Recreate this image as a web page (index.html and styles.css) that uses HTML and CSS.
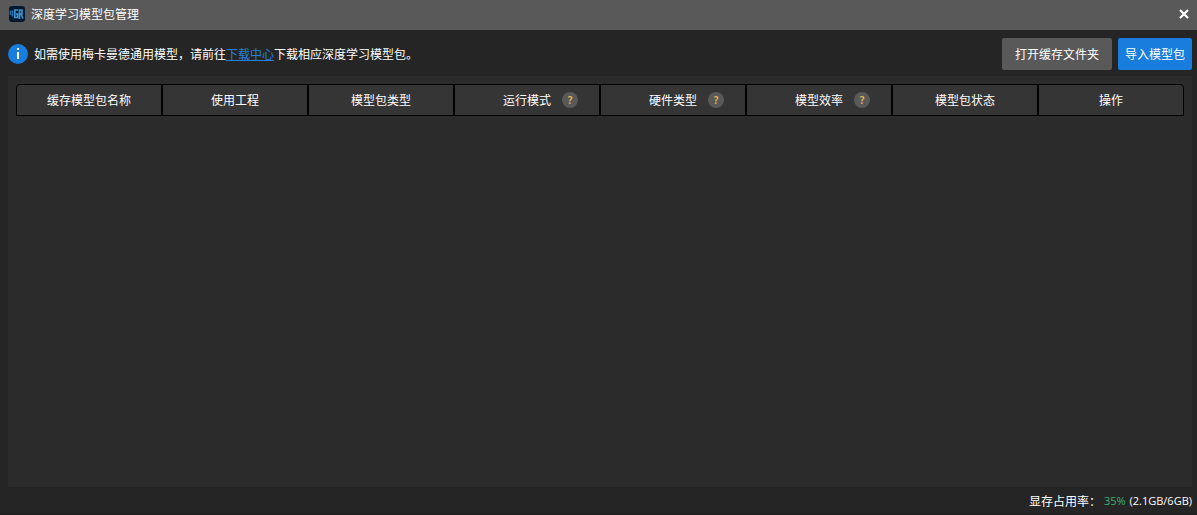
FILE: index.html
```html
<!DOCTYPE html>
<html lang="zh-CN">
<head>
<meta charset="utf-8">
<title>深度学习模型包管理</title>
<link rel="stylesheet" href="styles.css">
</head>
<body>
<div class="window">
  <header class="titlebar">
    <svg class="logo" viewBox="0 0 16 16" aria-hidden="true">
      <rect width="16" height="16" rx="3" fill="#05192e"/>
      <path d="M1.500 4.500v4.500M3.500 4.500v6" fill="none" stroke="#2a70ab" stroke-width="1.500"/>
      <path d="M9 4H5.800v7.500H8.500V8H7M10.500 13V4H13v4h-2.500M12 8l2 4.500" fill="none" stroke="#3f92cf" stroke-width="1.700"/>
    </svg>
    <h1 class="title">深度学习模型包管理</h1>
    <button class="close" type="button" aria-label="关闭">
      <svg viewBox="0 0 10 10" aria-hidden="true"><path d="M1 1l8 8M9 1l-8 8" stroke="#fff" stroke-width="2.200"/></svg>
    </button>
  </header>
  <div class="toolbar">
    <svg class="info" viewBox="0 0 20 20" aria-hidden="true">
      <circle cx="10" cy="10" r="10" fill="#187ddd"/>
      <path d="M9 4h2v2H9zM9 8h2v7H9z" fill="#fff"/>
    </svg>
    <p class="hint">如需使用梅卡曼德通用模型，请前往<a class="link" href="#">下载中心</a>下载相应深度学习模型包。</p>
    <button class="button" type="button">打开缓存文件夹</button>
    <button class="button primary" type="button">导入模型包</button>
  </div>
  <main class="panel">
    <table class="models">
      <thead>
        <tr>
          <th>缓存模型包名称</th>
          <th>使用工程</th>
          <th>模型包类型</th>
          <th><div class="head"><span class="label">运行模式</span><button class="help" type="button">?</button></div></th>
          <th><div class="head"><span class="label">硬件类型</span><button class="help" type="button">?</button></div></th>
          <th><div class="head"><span class="label">模型效率</span><button class="help" type="button">?</button></div></th>
          <th>模型包状态</th>
          <th>操作</th>
        </tr>
      </thead>
    </table>
  </main>
  <footer class="status"><span>显存占用率：</span><span class="usage"><span class="percent">35%</span> (2.1GB/6GB)</span></footer>
</div>
</body>
</html>
```

FILE: styles.css
```css
* {
  box-sizing: border-box;
}

body {
  margin: 0;
  background: #252525;
  color: #fff;
  font: 12px/16px "Noto Sans CJK SC", sans-serif;
}

button {
  border: 0;
  padding: 0;
  color: inherit;
  font: inherit;
}

.window {
  display: flex;
  flex-direction: column;
  min-height: 100vh;
  border-bottom: 2px solid #202020;
}

.titlebar {
  display: flex;
  align-items: center;
  height: 30px;
  padding: 0 8px 2px 9px;
  background: #595959;
}

.logo {
  width: 16px;
  height: 16px;
}

.title {
  flex: 1;
  margin: 0 6px;
  font-size: 12px;
  font-weight: 400;
}

.close {
  display: flex;
  background: none;
}

.close svg {
  width: 10px;
  height: 10px;
}

.toolbar {
  display: flex;
  align-items: center;
  gap: 6px;
  height: 46px;
  padding: 2px 5px 0 8px;
}

.info {
  width: 20px;
  height: 20px;
}

.hint {
  flex: 1;
  margin: 0;
}

.link {
  color: #2680dc;
  text-underline-offset: 1px;
}

.button {
  height: 32px;
  padding: 0 13px;
  border-radius: 2px;
  background: #595959;
}

.primary {
  padding: 0 7px;
  background: #187ddd;
}

.panel {
  flex: 1;
  margin: 0 5px 0 8px;
  padding: 8px;
  background: #2b2b2b;
}

.models {
  width: 100%;
  table-layout: fixed;
  border-collapse: separate;
  border-spacing: 0;
}

.models th {
  height: 32px;
  padding: 0;
  border: 1px solid #000;
  background: #353535;
  font-weight: 400;
}

.models th:first-child {
  border-top-left-radius: 4px;
}

.models th:last-child {
  border-top-right-radius: 4px;
}

.head {
  display: grid;
  grid-template-columns: 1fr auto 1fr;
  align-items: center;
  column-gap: 11px;
}

.label {
  grid-column: 2;
}

.help {
  width: 16px;
  height: 16px;
  border-radius: 50%;
  background: #595959;
  color: #e8b950;
  font: 600 10px/16px "Noto Sans", sans-serif;
}

.status {
  display: flex;
  justify-content: flex-end;
  align-items: center;
  gap: 3px;
  height: 26px;
  padding: 2px 5px 0;
}

.usage {
  font: 11px/16px "Open Sans", sans-serif;
}

.percent {
  margin-right: 1px;
  color: #3cb371;
}
```
